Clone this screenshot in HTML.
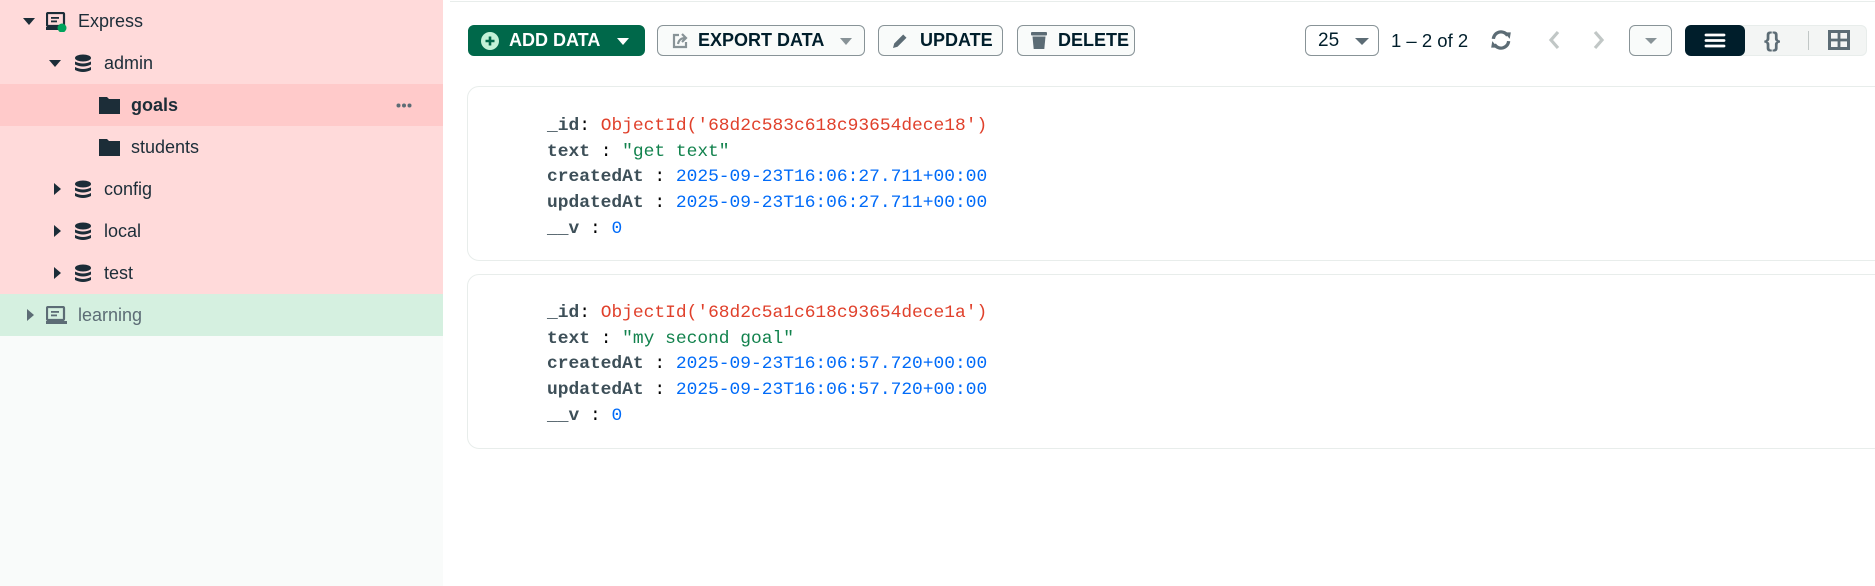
<!DOCTYPE html>
<html><head><meta charset="utf-8"><style>
*{box-sizing:border-box;margin:0;padding:0}
body{width:1875px;height:586px;overflow:hidden;background:#fff;font-family:"Liberation Sans",sans-serif;position:relative}
.a{position:absolute}
.side{left:0;top:0;width:443px;height:586px;background:#f9fbfa}
.row{position:absolute;left:0;width:443px;height:42px;font-size:18px;color:#1c2d38;line-height:42px}
.row span{position:absolute}
.tri{position:absolute;width:0;height:0}
.td{border-left:6px solid transparent;border-right:6px solid transparent;border-top:7px solid #1c2d38}
.tr{border-top:6px solid transparent;border-bottom:6px solid transparent;border-left:7px solid #1c2d38}
.btn{position:absolute;top:25px;height:31px;border:1px solid #889397;border-radius:6px;background:#f9fbfa;font-weight:bold;font-size:18px;color:#001e2b;line-height:29px;white-space:nowrap}
.card{position:absolute;left:467px;width:1420px;border:1px solid #e8edeb;border-radius:12px;background:#fff}
.ln{position:absolute;left:547px;font-size:17.9px;font-family:"Liberation Mono",monospace;height:26px;line-height:26px;white-space:pre}
.k{font-weight:bold;color:#3d4f58}
.r{color:#e0402b}.g{color:#12824d}.b{color:#016bf8}
</style></head><body>
<div class="a" style="left:450px;top:0;width:1425px;height:2px;border-bottom:1px solid #e8edeb"></div>
<div class="a side"></div>
<div class="row" style="top:0;background:#ffdada"><div class="tri td" style="left:23px;top:18px"></div>
<svg class="a" style="left:46px;top:12px" width="22" height="20" viewBox="0 0 22 20"><rect x="1" y="1" width="17" height="13" rx="1" fill="none" stroke="#1c2d38" stroke-width="2.2"/><rect x="5" y="5" width="8" height="1.8" fill="#1c2d38"/><rect x="5" y="8.5" width="6" height="1.8" fill="#1c2d38"/><rect x="0" y="15" width="19" height="3" fill="#1c2d38"/><circle cx="16" cy="16" r="4.5" fill="#00a35c"/></svg>
<span style="left:78px">Express</span></div>
<div class="row" style="top:42px;background:#ffdada"><div class="tri td" style="left:49px;top:18px"></div>
<svg class="a" style="left:74px;top:12px" width="18" height="20" viewBox="0 0 18 20"><ellipse cx="9" cy="4" rx="8" ry="3.5" fill="#1c2d38"/><path d="M1 7.5q8 4 16 0v3q-8 4-16 0z M1 13q8 4 16 0v3q-8 4-16 0z" fill="#1c2d38"/></svg>
<span style="left:104px">admin</span></div>
<div class="row" style="top:84px;background:#ffcaca"><svg class="a" style="left:99px;top:13px" width="22" height="17" viewBox="0 0 22 17"><path d="M0 0h8l2 2h11v15h-21z" fill="#1c2d38"/></svg>
<span style="left:131px;font-weight:bold">goals</span>
<svg class="a" style="left:396px;top:19px" width="16" height="5"><circle cx="2.5" cy="2.5" r="2" fill="#5c6c75"/><circle cx="8" cy="2.5" r="2" fill="#5c6c75"/><circle cx="13.5" cy="2.5" r="2" fill="#5c6c75"/></svg></div>
<div class="row" style="top:126px;background:#ffdada"><svg class="a" style="left:99px;top:13px" width="22" height="17" viewBox="0 0 22 17"><path d="M0 0h8l2 2h11v15h-21z" fill="#1c2d38"/></svg>
<span style="left:131px">students</span></div>
<div class="row" style="top:168px;background:#ffdada"><div class="tri tr" style="left:54px;top:15px"></div>
<svg class="a" style="left:74px;top:12px" width="18" height="20" viewBox="0 0 18 20"><ellipse cx="9" cy="4" rx="8" ry="3.5" fill="#1c2d38"/><path d="M1 7.5q8 4 16 0v3q-8 4-16 0z M1 13q8 4 16 0v3q-8 4-16 0z" fill="#1c2d38"/></svg>
<span style="left:104px">config</span></div>
<div class="row" style="top:210px;background:#ffdada"><div class="tri tr" style="left:54px;top:15px"></div>
<svg class="a" style="left:74px;top:12px" width="18" height="20" viewBox="0 0 18 20"><ellipse cx="9" cy="4" rx="8" ry="3.5" fill="#1c2d38"/><path d="M1 7.5q8 4 16 0v3q-8 4-16 0z M1 13q8 4 16 0v3q-8 4-16 0z" fill="#1c2d38"/></svg>
<span style="left:104px">local</span></div>
<div class="row" style="top:252px;background:#ffdada"><div class="tri tr" style="left:54px;top:15px"></div>
<svg class="a" style="left:74px;top:12px" width="18" height="20" viewBox="0 0 18 20"><ellipse cx="9" cy="4" rx="8" ry="3.5" fill="#1c2d38"/><path d="M1 7.5q8 4 16 0v3q-8 4-16 0z M1 13q8 4 16 0v3q-8 4-16 0z" fill="#1c2d38"/></svg>
<span style="left:104px">test</span></div>
<div class="row" style="top:294px;background:#d5f0e0;color:#5c6c75"><div class="tri tr" style="left:27px;top:15px;border-left-color:#5c6c75"></div>
<svg class="a" style="left:46px;top:12px" width="22" height="20" viewBox="0 0 22 20"><rect x="1" y="1" width="17" height="13" rx="1" fill="none" stroke="#5c6c75" stroke-width="2.2"/><rect x="5" y="5" width="8" height="1.8" fill="#5c6c75"/><rect x="5" y="8.5" width="6" height="1.8" fill="#5c6c75"/><rect x="0" y="15" width="21" height="3" fill="#5c6c75"/></svg>
<span style="left:78px">learning</span></div>

<div class="btn" style="left:468px;width:177px;background:#00684a;border-color:#00684a;color:#fff">
<svg class="a" style="left:12px;top:6px" width="18" height="18"><circle cx="9" cy="9" r="9" fill="#c3f2d8"/><path d="M9 4.5v9M4.5 9h9" stroke="#00684a" stroke-width="2.6"/></svg>
<span class="a" style="left:40px">ADD DATA</span><div class="tri td" style="left:148px;top:12px;border-top-color:#fff;border-width:7px 6px 0"></div></div>
<div class="btn" style="left:657px;width:208px">
<svg class="a" style="left:13px;top:6px" width="18" height="18"><path d="M8 3H3v12h12v-5" fill="none" stroke="#889397" stroke-width="2.2"/><path d="M7 12c1-5 4-6 8-6M11 2l4 4-4 4" fill="none" stroke="#889397" stroke-width="2.2"/></svg>
<span class="a" style="left:40px">EXPORT DATA</span><div class="tri td" style="left:182px;top:12px;border-top-color:#889397;border-width:7px 6px 0"></div></div>
<div class="btn" style="left:878px;width:125px">
<svg class="a" style="left:12px;top:6px" width="18" height="18"><path d="M2 16l1.2-4.5 9-9 3.3 3.3-9 9z" fill="#5c6c75"/></svg>
<span class="a" style="left:41px">UPDATE</span></div>
<div class="btn" style="left:1017px;width:118px">
<svg class="a" style="left:13px;top:5px" width="16" height="19"><rect x="0" y="1" width="16" height="3.5" rx="1" fill="#5c6c75"/><path d="M1.5 5.5h13l-1.2 12.5h-10.6z" fill="#5c6c75"/></svg>
<span class="a" style="left:40px">DELETE</span></div>

<div class="btn" style="left:1305px;width:74px;background:#fff;font-weight:normal;font-size:19px"><span class="a" style="left:12px">25</span><div class="tri td" style="left:49px;top:12px;border-top-color:#5c6c75;border-width:7px 7px 0"></div></div>
<div class="a" style="left:1391px;top:25px;line-height:31px;font-size:18.5px;color:#001e2b">1 – 2 of 2</div>
<svg class="a" style="left:1489px;top:29px" width="24" height="22" viewBox="0 0 22 20"><path d="M4 9a7 7 0 0 1 13-3" fill="none" stroke="#5c6c75" stroke-width="3"/><path d="M14 3l6 0-1 6z" fill="#5c6c75"/><path d="M18 11a7 7 0 0 1-13 3" fill="none" stroke="#5c6c75" stroke-width="3"/><path d="M8 17l-6 0 1-6z" fill="#5c6c75"/></svg>
<svg class="a" style="left:1548px;top:30px" width="14" height="20"><path d="M10 2L3 10l7 8" fill="none" stroke="#c1c7c6" stroke-width="3.2"/></svg>
<svg class="a" style="left:1591px;top:30px" width="14" height="20"><path d="M4 2l7 8-7 8" fill="none" stroke="#c1c7c6" stroke-width="3.2"/></svg>
<div class="btn" style="left:1629px;width:43px"><div class="tri td" style="left:15px;top:12px;border-top-color:#889397;border-width:6px 6px 0"></div></div>
<div class="a" style="left:1685px;top:25px;width:182px;height:31px;border-radius:6px;background:#f3f5f4;border:1px solid #e8edeb"></div>
<div class="a" style="left:1685px;top:25px;width:60px;height:31px;border-radius:6px;background:#001e2b"></div>
<svg class="a" style="left:1704px;top:32px" width="22" height="17"><path d="M2 3h18M2 8.5h18M2 14h18" stroke="#fff" stroke-width="2.8" stroke-linecap="round"/></svg>
<div class="a" style="left:1764px;top:25px;line-height:31px;font-weight:bold;font-size:21px;color:#5c6c75">{}</div>
<div class="a" style="left:1808px;top:31px;width:1px;height:19px;background:#c1c7c6"></div>
<svg class="a" style="left:1828px;top:30px" width="22" height="20"><rect x="1.5" y="1.5" width="19" height="17" fill="none" stroke="#5c6c75" stroke-width="3"/><path d="M11 2v16M2 10h18" stroke="#5c6c75" stroke-width="2.8"/></svg>

<div class="card" style="top:86px;height:175px"></div>
<div class="card" style="top:274px;height:175px"></div>
<div class="ln" style="top:113px"><span class="k">_id</span>: <span class="r">ObjectId('68d2c583c618c93654dece18')</span></div>
<div class="ln" style="top:139px"><span class="k">text</span> : <span class="g">"get text"</span></div>
<div class="ln" style="top:164px"><span class="k">createdAt</span> : <span class="b">2025-09-23T16:06:27.711+00:00</span></div>
<div class="ln" style="top:190px"><span class="k">updatedAt</span> : <span class="b">2025-09-23T16:06:27.711+00:00</span></div>
<div class="ln" style="top:216px"><span class="k">__v</span> : <span class="b">0</span></div>
<div class="ln" style="top:300px"><span class="k">_id</span>: <span class="r">ObjectId('68d2c5a1c618c93654dece1a')</span></div>
<div class="ln" style="top:326px"><span class="k">text</span> : <span class="g">"my second goal"</span></div>
<div class="ln" style="top:351px"><span class="k">createdAt</span> : <span class="b">2025-09-23T16:06:57.720+00:00</span></div>
<div class="ln" style="top:377px"><span class="k">updatedAt</span> : <span class="b">2025-09-23T16:06:57.720+00:00</span></div>
<div class="ln" style="top:403px"><span class="k">__v</span> : <span class="b">0</span></div>
</body></html>
